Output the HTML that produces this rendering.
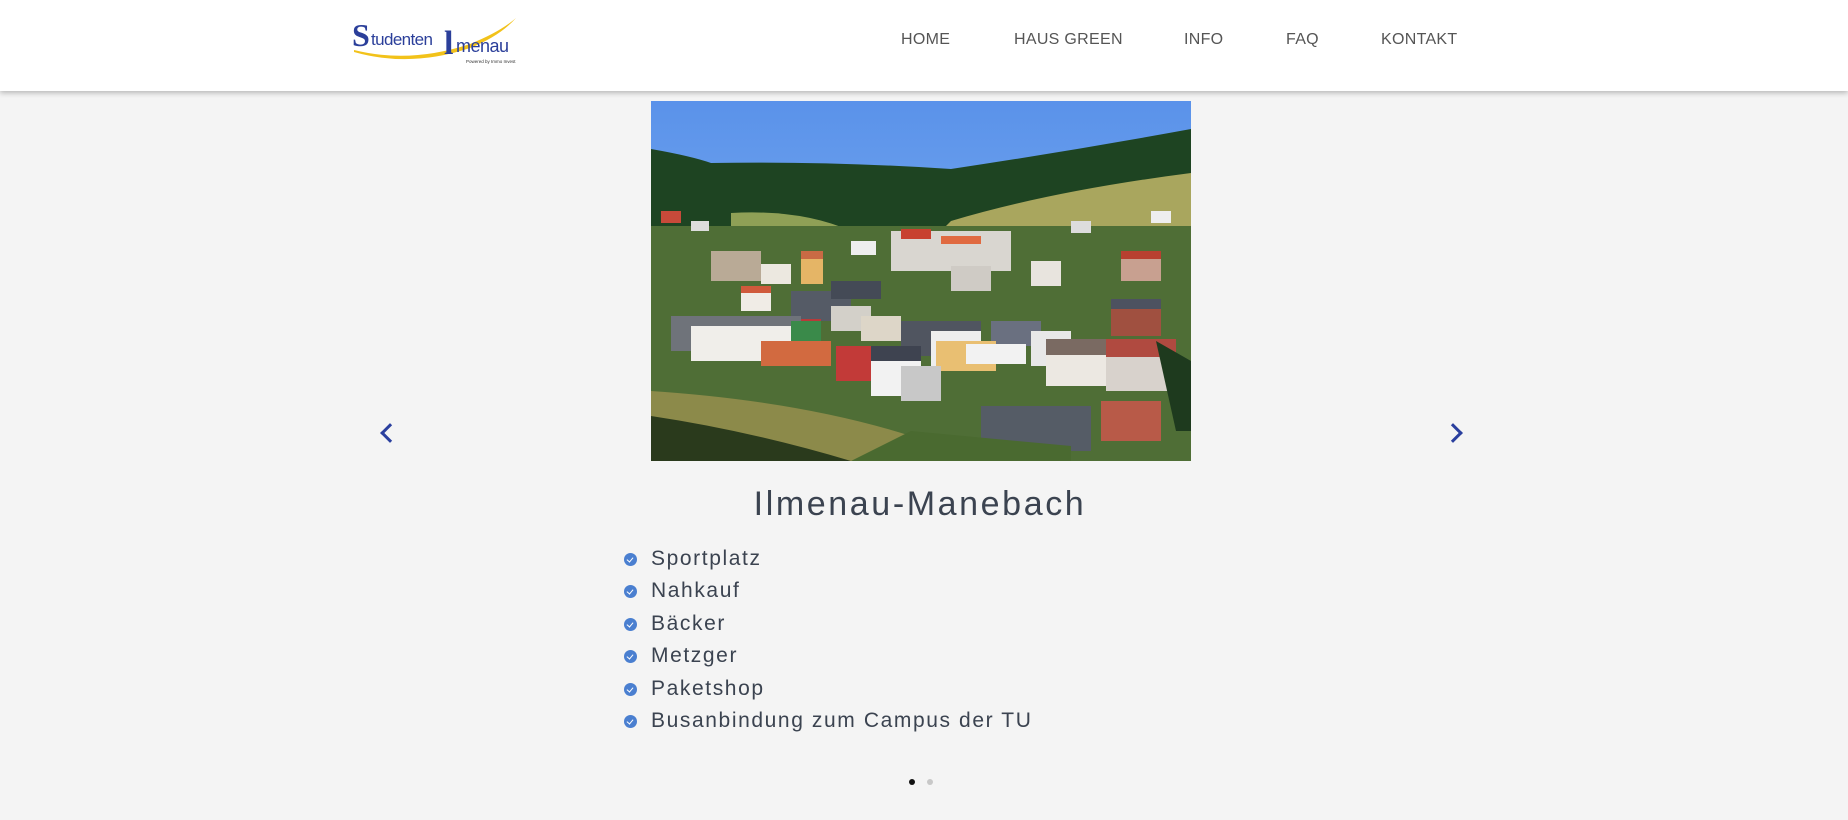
<!DOCTYPE html>
<html><head><meta charset="utf-8"><style>
*{margin:0;padding:0;box-sizing:border-box}
body{width:1848px;height:820px;background:#f4f4f4;font-family:"Liberation Sans",sans-serif;position:relative;overflow:hidden}
header{position:absolute;left:0;top:0;width:1848px;height:91px;background:#fff;box-shadow:0 2px 5px rgba(0,0,0,.25)}
.nav{position:absolute;top:31px;font-size:16px;color:#555;letter-spacing:.3px}
.arrow{position:absolute;width:14px;height:14px;border-left:3px solid #2a3f9e;border-bottom:3px solid #2a3f9e}
h1{position:absolute;left:600px;width:640px;top:485px;text-align:center;font-weight:normal;font-size:34px;color:#3b4350;letter-spacing:2.6px}
ul{position:absolute;left:624px;top:546px;list-style:none}
li{height:32.4px;font-size:21px;color:#3b4350;letter-spacing:1.6px;position:relative;padding-left:27px;line-height:26px}
li:before{content:"";position:absolute;left:0;top:7px;width:13px;height:13px;border-radius:50%;background:#4a7fd0}
li:after{content:"";position:absolute;left:4px;top:10px;width:3px;height:5px;border-right:1.6px solid #fff;border-bottom:1.6px solid #fff;transform:rotate(40deg)}
.dot{position:absolute;top:779px;width:6px;height:6px;border-radius:50%}
</style></head><body>
<header>
<svg style="position:absolute;left:350px;top:14px" width="182" height="54" viewBox="0 0 182 54">
<path d="M4 36 Q60 50 120 30 Q150 18 166 4 Q150 22 120 34 Q60 54 4 38Z" fill="#f2c21a"/>
<text x="2" y="32" font-family="Liberation Serif,serif" font-size="32" font-weight="bold" fill="#2b3f9a">S</text>
<text x="21" y="31" font-family="Liberation Sans,sans-serif" font-size="17" fill="#2b3f9a" letter-spacing="-0.6">tudenten</text>
<text x="94" y="40" font-family="Liberation Serif,serif" font-size="34" font-weight="bold" fill="#2b3f9a">l</text>
<text x="106" y="38" font-family="Liberation Sans,sans-serif" font-size="18" fill="#2b3f9a" letter-spacing="-0.5">menau</text>
<text x="116" y="49" font-family="Liberation Sans,sans-serif" font-size="4.5" fill="#333">Powered by Immo Invest</text>
</svg>
<div class="nav" style="left:901px">HOME</div>
<div class="nav" style="left:1014px">HAUS GREEN</div>
<div class="nav" style="left:1184px">INFO</div>
<div class="nav" style="left:1286px">FAQ</div>
<div class="nav" style="left:1381px">KONTAKT</div>
</header>
<svg style="position:absolute;left:651px;top:101px" width="540" height="360" viewBox="0 0 540 360">
<defs><linearGradient id="sk" x1="0" y1="0" x2="0" y2="1"><stop offset="0" stop-color="#5a92ea"/><stop offset="1" stop-color="#8dbcf2"/></linearGradient></defs>
<rect width="540" height="360" fill="url(#sk)"/>
<path d="M0 48 Q40 55 60 62 Q180 60 300 68 Q420 50 540 28 L540 120 L0 140Z" fill="#1e4422"/>
<path d="M300 120 Q400 90 540 72 L540 130 L280 140Z" fill="#a9a65e"/>
<path d="M80 112 Q150 108 200 130 L80 140Z" fill="#8fa056"/>
<rect x="0" y="125" width="540" height="235" fill="#4f6e36"/>
<g>
<rect x="60" y="150" width="50" height="30" fill="#b9aa96"/><rect x="110" y="163" width="30" height="20" fill="#ece8e0"/>
<rect x="150" y="155" width="22" height="28" fill="#e5b566"/><rect x="150" y="150" width="22" height="8" fill="#c96a44"/>
<rect x="90" y="190" width="30" height="20" fill="#f0ece6"/><rect x="90" y="185" width="30" height="7" fill="#d05a3c"/>
<rect x="140" y="190" width="60" height="30" fill="#555b66"/><rect x="180" y="180" width="50" height="18" fill="#444a56"/>
<rect x="240" y="130" width="120" height="40" fill="#d9d6d0"/><rect x="250" y="128" width="30" height="10" fill="#c8412f"/><rect x="290" y="135" width="40" height="8" fill="#e06a40"/>
<rect x="300" y="165" width="40" height="25" fill="#cfcbc5"/><rect x="380" y="160" width="30" height="25" fill="#e8e4de"/><rect x="470" y="155" width="40" height="25" fill="#c8a090"/><rect x="470" y="150" width="40" height="8" fill="#b84030"/>
<rect x="180" y="205" width="40" height="25" fill="#d3d0c9"/><rect x="210" y="215" width="40" height="25" fill="#ddd6c8"/>
<rect x="250" y="220" width="80" height="35" fill="#505560"/><rect x="280" y="230" width="50" height="35" fill="#eeeeee"/>
<rect x="340" y="220" width="50" height="25" fill="#6a7080"/><rect x="380" y="230" width="40" height="35" fill="#e8e8e8"/>
<rect x="460" y="205" width="50" height="30" fill="#a05040"/><rect x="460" y="198" width="50" height="10" fill="#4d5260"/>
<rect x="130" y="225" width="40" height="30" fill="#f4f2ee"/><rect x="130" y="218" width="40" height="8" fill="#b83a3a"/>
<rect x="10" y="110" width="20" height="12" fill="#c84a3a"/><rect x="40" y="120" width="18" height="10" fill="#ddd"/><rect x="200" y="140" width="25" height="14" fill="#eee"/><rect x="420" y="120" width="20" height="12" fill="#ddd"/><rect x="500" y="110" width="20" height="12" fill="#eee"/>
</g>
<rect x="20" y="215" width="130" height="35" fill="#6f737a"/><rect x="40" y="225" width="100" height="35" fill="#f0eeea"/>
<rect x="140" y="220" width="30" height="30" fill="#3a8a4a"/>
<rect x="110" y="240" width="70" height="25" fill="#d26a40"/><rect x="185" y="245" width="45" height="35" fill="#c23a38"/>
<rect x="220" y="250" width="50" height="45" fill="#f2f2f2"/><rect x="220" y="245" width="50" height="15" fill="#3e4350"/>
<rect x="285" y="240" width="60" height="30" fill="#e9bf72"/><rect x="315" y="243" width="60" height="20" fill="#f2f2f2"/>
<rect x="250" y="265" width="40" height="35" fill="#c8c8c8"/>
<rect x="395" y="240" width="60" height="45" fill="#ece8e2"/><rect x="395" y="238" width="60" height="16" fill="#7a6a62"/>
<rect x="455" y="240" width="70" height="50" fill="#d8d2cc"/><rect x="455" y="238" width="70" height="18" fill="#b04a40"/>
<rect x="330" y="305" width="110" height="45" fill="#555c66"/>
<rect x="450" y="300" width="60" height="40" fill="#b85a48"/>
<path d="M0 290 Q150 300 260 335 L260 360 L0 360Z" fill="#8c8a4a"/>
<path d="M0 315 Q100 330 200 360 L0 360Z" fill="#2a3a1c"/>
<path d="M260 330 L420 345 L420 360 L200 360Z" fill="#4a6a30"/>
<path d="M505 240 L525 330 L540 330 L540 260Z" fill="#1e3a1e"/>
</svg>
<div class="arrow" style="left:383px;top:426px;transform:rotate(45deg)"></div>
<div class="arrow" style="left:1446px;top:426px;transform:rotate(-135deg)"></div>
<h1>Ilmenau-Manebach</h1>
<ul>
<li>Sportplatz</li><li>Nahkauf</li><li>Bäcker</li><li>Metzger</li><li>Paketshop</li><li>Busanbindung zum Campus der TU</li>
</ul>
<div class="dot" style="left:909px;background:#111"></div>
<div class="dot" style="left:927px;background:#c8c8c8"></div>
</body></html>
